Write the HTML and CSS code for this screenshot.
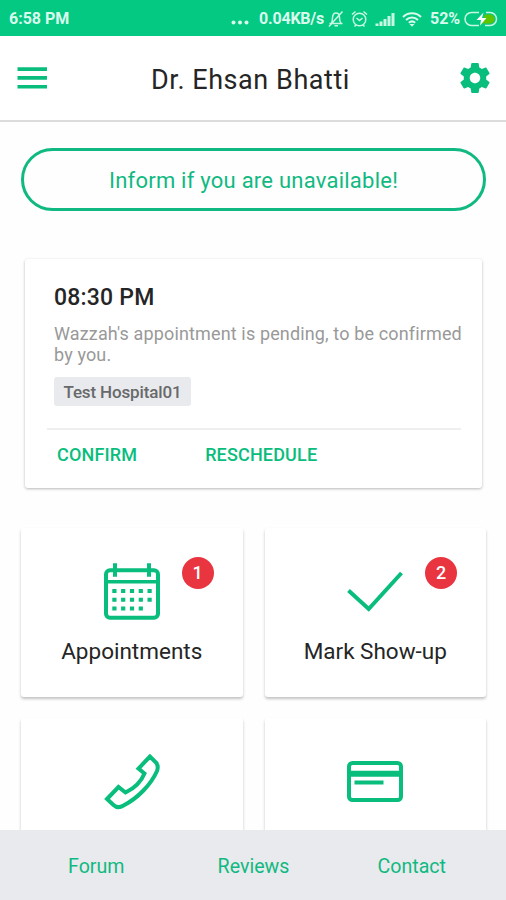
FILE: index.html
```html
<!DOCTYPE html>
<html lang="en">
<head>
    <meta charset="UTF-8">
    <meta name="viewport" content="width=device-width, initial-scale=1.0">
    <title>Dashboard</title>
    <link rel="stylesheet" href="styles.css">
</head>
<body>

<div class="status-bar">
    <span class="time">6:58 PM</span>
    <svg class="dots" width="18" height="18" viewBox="0 0 18 18" fill="#d9fbee">
        <circle cx="2.5" cy="12.5" r="2"/><circle cx="9" cy="12.5" r="2"/><circle cx="15.5" cy="12.5" r="2"/>
    </svg>
    <span class="speed">0.04KB/s</span>
    <svg class="bell" width="16" height="18" viewBox="0 0 16 18" fill="none" stroke="#c5f7e4" stroke-width="1.5">
        <path d="M1.500 13.500h13M3.500 13c1-1.500 .8-3 1-5.500C4.800 4.500 6 3 8 3s3.500 1.500 3.500 4.500c0 3 .3 4.500 1.500 5.800M6.500 15.800h3.500M1 16.500L14.500 1.500"/>
    </svg>
    <svg class="alarm" width="17" height="18" viewBox="0 0 17 18" fill="none" stroke="#c5f7e4" stroke-width="1.5">
        <circle cx="8.500" cy="9.500" r="6.300"/>
        <path d="M5.500 8l3 2.500 3-2.500M1 4.500l3.500-3M16 4.500l-3.500-3M3.500 16.500l1.500-1.500M13.500 16.500L12 15"/>
    </svg>
    <svg class="signal" width="20" height="18" viewBox="0 0 20 18" fill="#c5f7e4">
        <path d="M.5 13.500h3V16h-3zM4.500 11.500h3V16h-3zM8.500 9h3v7h-3zM12.500 6h3v10h-3zM16.500 3h3v13h-3z"/>
    </svg>
    <svg class="wifi" width="20" height="18" viewBox="0 0 20 18" fill="none" stroke="#d9fbee" stroke-width="2">
        <path d="M1 7c5-5 13-5 18 0M4 10c3.500-3.500 8.500-3.500 12 0M6.800 12.800c2-1.800 4.400-1.800 6.400 0"/>
        <path d="M7.500 14h5L10 16.800z" fill="#d9fbee" stroke="none"/>
    </svg>
    <span class="percent">52%</span>
    <svg class="battery" width="34" height="18" viewBox="0 0 34 18">
        <path d="M21 4.500h5a4.500 4.500 0 0 1 0 9h-8z" fill="#5cc400"/>
        <path d="M15 2.500H7.500a6.500 6.500 0 0 0 0 13H15M22 2.500h4a6.500 6.500 0 0 1 0 13h-5" fill="none" stroke="#c5f7e4" stroke-width="1.5"/>
        <path d="M19.500 2.500L12.500 10h4.500l-1 5.500L22.500 8H18z" fill="#fff"/>
    </svg>
</div>

<header class="header">
    <button class="icon-button" aria-label="Menu">
        <svg width="30" height="24" viewBox="0 0 30 24" fill="#09bd7d">
            <path d="M.5 1.300H30v3.600H.5zM.5 10.100H30v3.600H.5zM.5 18.900H30v3.600H.5z"/>
        </svg>
    </button>
    <h1 class="title">Dr. Ehsan Bhatti</h1>
    <button class="icon-button" aria-label="Settings">
        <svg width="36" height="36" viewBox="0 0 24 24" fill="#09bd7d">
            <path d="M19.430 12.980c.04-.32.070-.64.070-.98s-.03-.66-.07-.98l2.110-1.650c.19-.15.240-.42.120-.64l-2-3.460c-.12-.22-.39-.3-.61-.22l-2.490 1c-.52-.4-1.080-.73-1.690-.98l-.38-2.650C14.460 2.180 14.250 2 14 2h-4c-.25 0-.46.18-.49.42l-.38 2.650c-.61.25-1.170.59-1.690.98l-2.490-1c-.23-.09-.49 0-.61.22l-2 3.460c-.13.22-.07.49.12.64l2.110 1.650c-.04.32-.07.65-.07.98s.03.66.07.98l-2.110 1.650c-.19.15-.24.42-.12.64l2 3.460c.12.22.39.3.61.22l2.490-1c.52.4 1.080.73 1.690.98l.38 2.650c.03.24.24.42.49.42h4c.25 0 .46-.18.49-.42l.38-2.650c.61-.25 1.170-.59 1.690-.98l2.490 1c.23.09.49 0 .61-.22l2-3.460c.12-.22.070-.49-.12-.64l-2.110-1.650zM12 15.500c-1.930 0-3.500-1.570-3.500-3.500s1.570-3.500 3.500-3.500 3.500 1.570 3.500 3.500-1.570 3.500-3.500 3.500z"/>
        </svg>
    </button>
</header>

<main class="content">
    <button class="inform-button">Inform if you are unavailable!</button>

    <div class="appointment">
        <div class="appointment-time">08:30 PM</div>
        <p class="appointment-text">Wazzah's appointment is pending, to be confirmed by you.</p>
        <span class="hospital">Test Hospital01</span>
        <div class="actions">
            <button class="action">CONFIRM</button>
            <button class="action">RESCHEDULE</button>
        </div>
    </div>

    <div class="tiles">
        <div class="tile">
            <span class="badge">1</span>
            <svg width="56" height="57" viewBox="0 0 56 57" fill="none" stroke="#09bd7d" stroke-width="4">
                <rect x="2" y="7.300" width="52" height="47.400" rx="4"/>
                <path d="M2 18.700h52" stroke-width="3.5"/>
                <path d="M11 .3v13.400M45 .3v13.400"/>
                <path d="M8.300 28h40M8.300 36.800h40M8.300 45.600h31" stroke-dasharray="4.200 4.600"/>
            </svg>
            <span class="tile-label">Appointments</span>
        </div>
        <div class="tile">
            <span class="badge">2</span>
            <svg width="56" height="57" viewBox="0 0 56 57" fill="none" stroke="#09bd7d" stroke-width="4">
                <path d="M1.500 27.500L21.700 46 54.500 10"/>
            </svg>
            <span class="tile-label">Mark Show-up</span>
        </div>
        <div class="tile">
            <svg width="56" height="57" viewBox="0 0 56 57" fill="none" stroke="#09bd7d" stroke-width="4">
                <path d="M46 3.500L34.500 15.500l6 5C37 29 30 35.500 21.500 39.500L14.500 34 3 46l6.500 6c3 2.800 6.500 2.600 10 .5C34 45 47 31.500 53 18c1.300-3.500 1-6-1-8.500z"/>
            </svg>
        </div>
        <div class="tile">
            <svg width="56" height="57" viewBox="0 0 56 57" fill="none" stroke="#09bd7d" stroke-width="4">
                <rect x="2" y="10" width="52" height="37" rx="3.500"/>
                <path d="M2 20.700h52" stroke-width="6"/>
                <path d="M7.500 29.500h29"/>
            </svg>
        </div>
    </div>
</main>

<nav class="bottom-nav">
    <a class="nav-link">Forum</a>
    <a class="nav-link">Reviews</a>
    <a class="nav-link">Contact</a>
</nav>

</body>
</html>
```
FILE: styles.css
```css
* {
    box-sizing: border-box;
}

body {
    font-family: Roboto, 'Liberation Sans', sans-serif;
    background-color: #fefefe;
    color: #252525;
    display: flex;
    flex-direction: column;
    height: 100vh;
    margin: 0;
    overflow: hidden;
}

button {
    font-family: inherit;
    background: none;
    border: none;
    padding: 0;
    cursor: pointer;
}

.status-bar {
    background-color: #04c983;
    color: #d9fbee;
    height: 36px;
    flex-shrink: 0;
    display: flex;
    align-items: center;
    padding: 1px 8px 0 9px;
    font-size: 16px;
    font-weight: 700;
    white-space: nowrap;
}

.time {
    flex: 1;
}

.speed {
    width: 65px;
    margin: 0 4px 0 10px;
    letter-spacing: -0.2px;
}

.alarm {
    margin-left: 7px;
}

.signal {
    margin-left: 7px;
}

.wifi {
    margin-left: 7px;
}

.percent {
    width: 30px;
    margin: 0 4px 0 8px;
}

.header {
    background-color: #fff;
    height: 86px;
    flex-shrink: 0;
    display: flex;
    align-items: center;
    justify-content: space-between;
    padding: 0 13px 1px 17px;
    border-bottom: 2px solid #dcdcdc;
}

.icon-button {
    width: 36px;
    height: 36px;
    display: flex;
    align-items: center;
}

.title {
    margin: 4px 9px 0 0;
    font-size: 27px;
    font-weight: 400;
    letter-spacing: 0.55px;
}

.content {
    flex: 1;
    min-height: 0;
    overflow: hidden;
    padding: 26px 20px 0 21px;
}

.inform-button {
    display: block;
    width: 100%;
    height: 63px;
    padding-top: 2px;
    border: 3px solid #10b981;
    border-radius: 32px;
    color: #10b981;
    font-size: 22px;
    letter-spacing: 0.24px;
}

.appointment {
    background-color: #fff;
    height: 229px;
    margin: 48px 4px 0;
    padding: 24px 18px 0 29px;
    border-radius: 3px;
    box-shadow: 0 1px 3px rgba(0, 0, 0, 0.28);
}

.appointment-time {
    font-size: 23px;
    font-weight: 500;
    line-height: 30px;
    letter-spacing: 0.2px;
}

.appointment-text {
    color: #999;
    font-size: 18px;
    line-height: 21px;
    letter-spacing: 0.14px;
    margin: 10px 0 12px;
}

.hospital {
    display: block;
    width: 137px;
    height: 29px;
    background-color: #e9eaed;
    border-radius: 3px;
    color: #68696b;
    font-size: 17px;
    font-weight: 500;
    line-height: 30px;
    letter-spacing: -0.14px;
    text-align: center;
}

.actions {
    display: flex;
    gap: 68px;
    margin: 22px 3px 0 -7px;
    padding: 13px 0 0 10px;
    border-top: 2px solid #efefef;
}

.action {
    color: #09bd7d;
    font-size: 18px;
    font-weight: 500;
    line-height: 24px;
    letter-spacing: 0.16px;
}

.tiles {
    display: grid;
    grid-template-columns: 1fr 1fr;
    gap: 21px 22px;
    margin-top: 40px;
}

.tile {
    position: relative;
    background-color: #fff;
    height: 169px;
    padding-top: 35px;
    border-radius: 3px;
    box-shadow: 0 2px 3px rgba(0, 0, 0, 0.24);
    display: flex;
    flex-direction: column;
    align-items: center;
}

.tile-label {
    font-size: 22.5px;
    line-height: 30px;
    margin-top: 16px;
}

.badge {
    position: absolute;
    top: 29px;
    right: 29px;
    width: 32px;
    height: 32px;
    border-radius: 50%;
    background-color: #e9353f;
    color: #fff;
    font-size: 18px;
    font-weight: 500;
    line-height: 32px;
    text-align: center;
}

.bottom-nav {
    background-color: #e9eaed;
    height: 70px;
    flex-shrink: 0;
    display: flex;
    align-items: center;
    justify-content: space-between;
    padding: 2px 60px 0 68px;
}

.nav-link {
    color: #10b981;
    font-size: 19.6px;
}

.nav-link:nth-child(2) {
    margin-left: 5px;
}
```
